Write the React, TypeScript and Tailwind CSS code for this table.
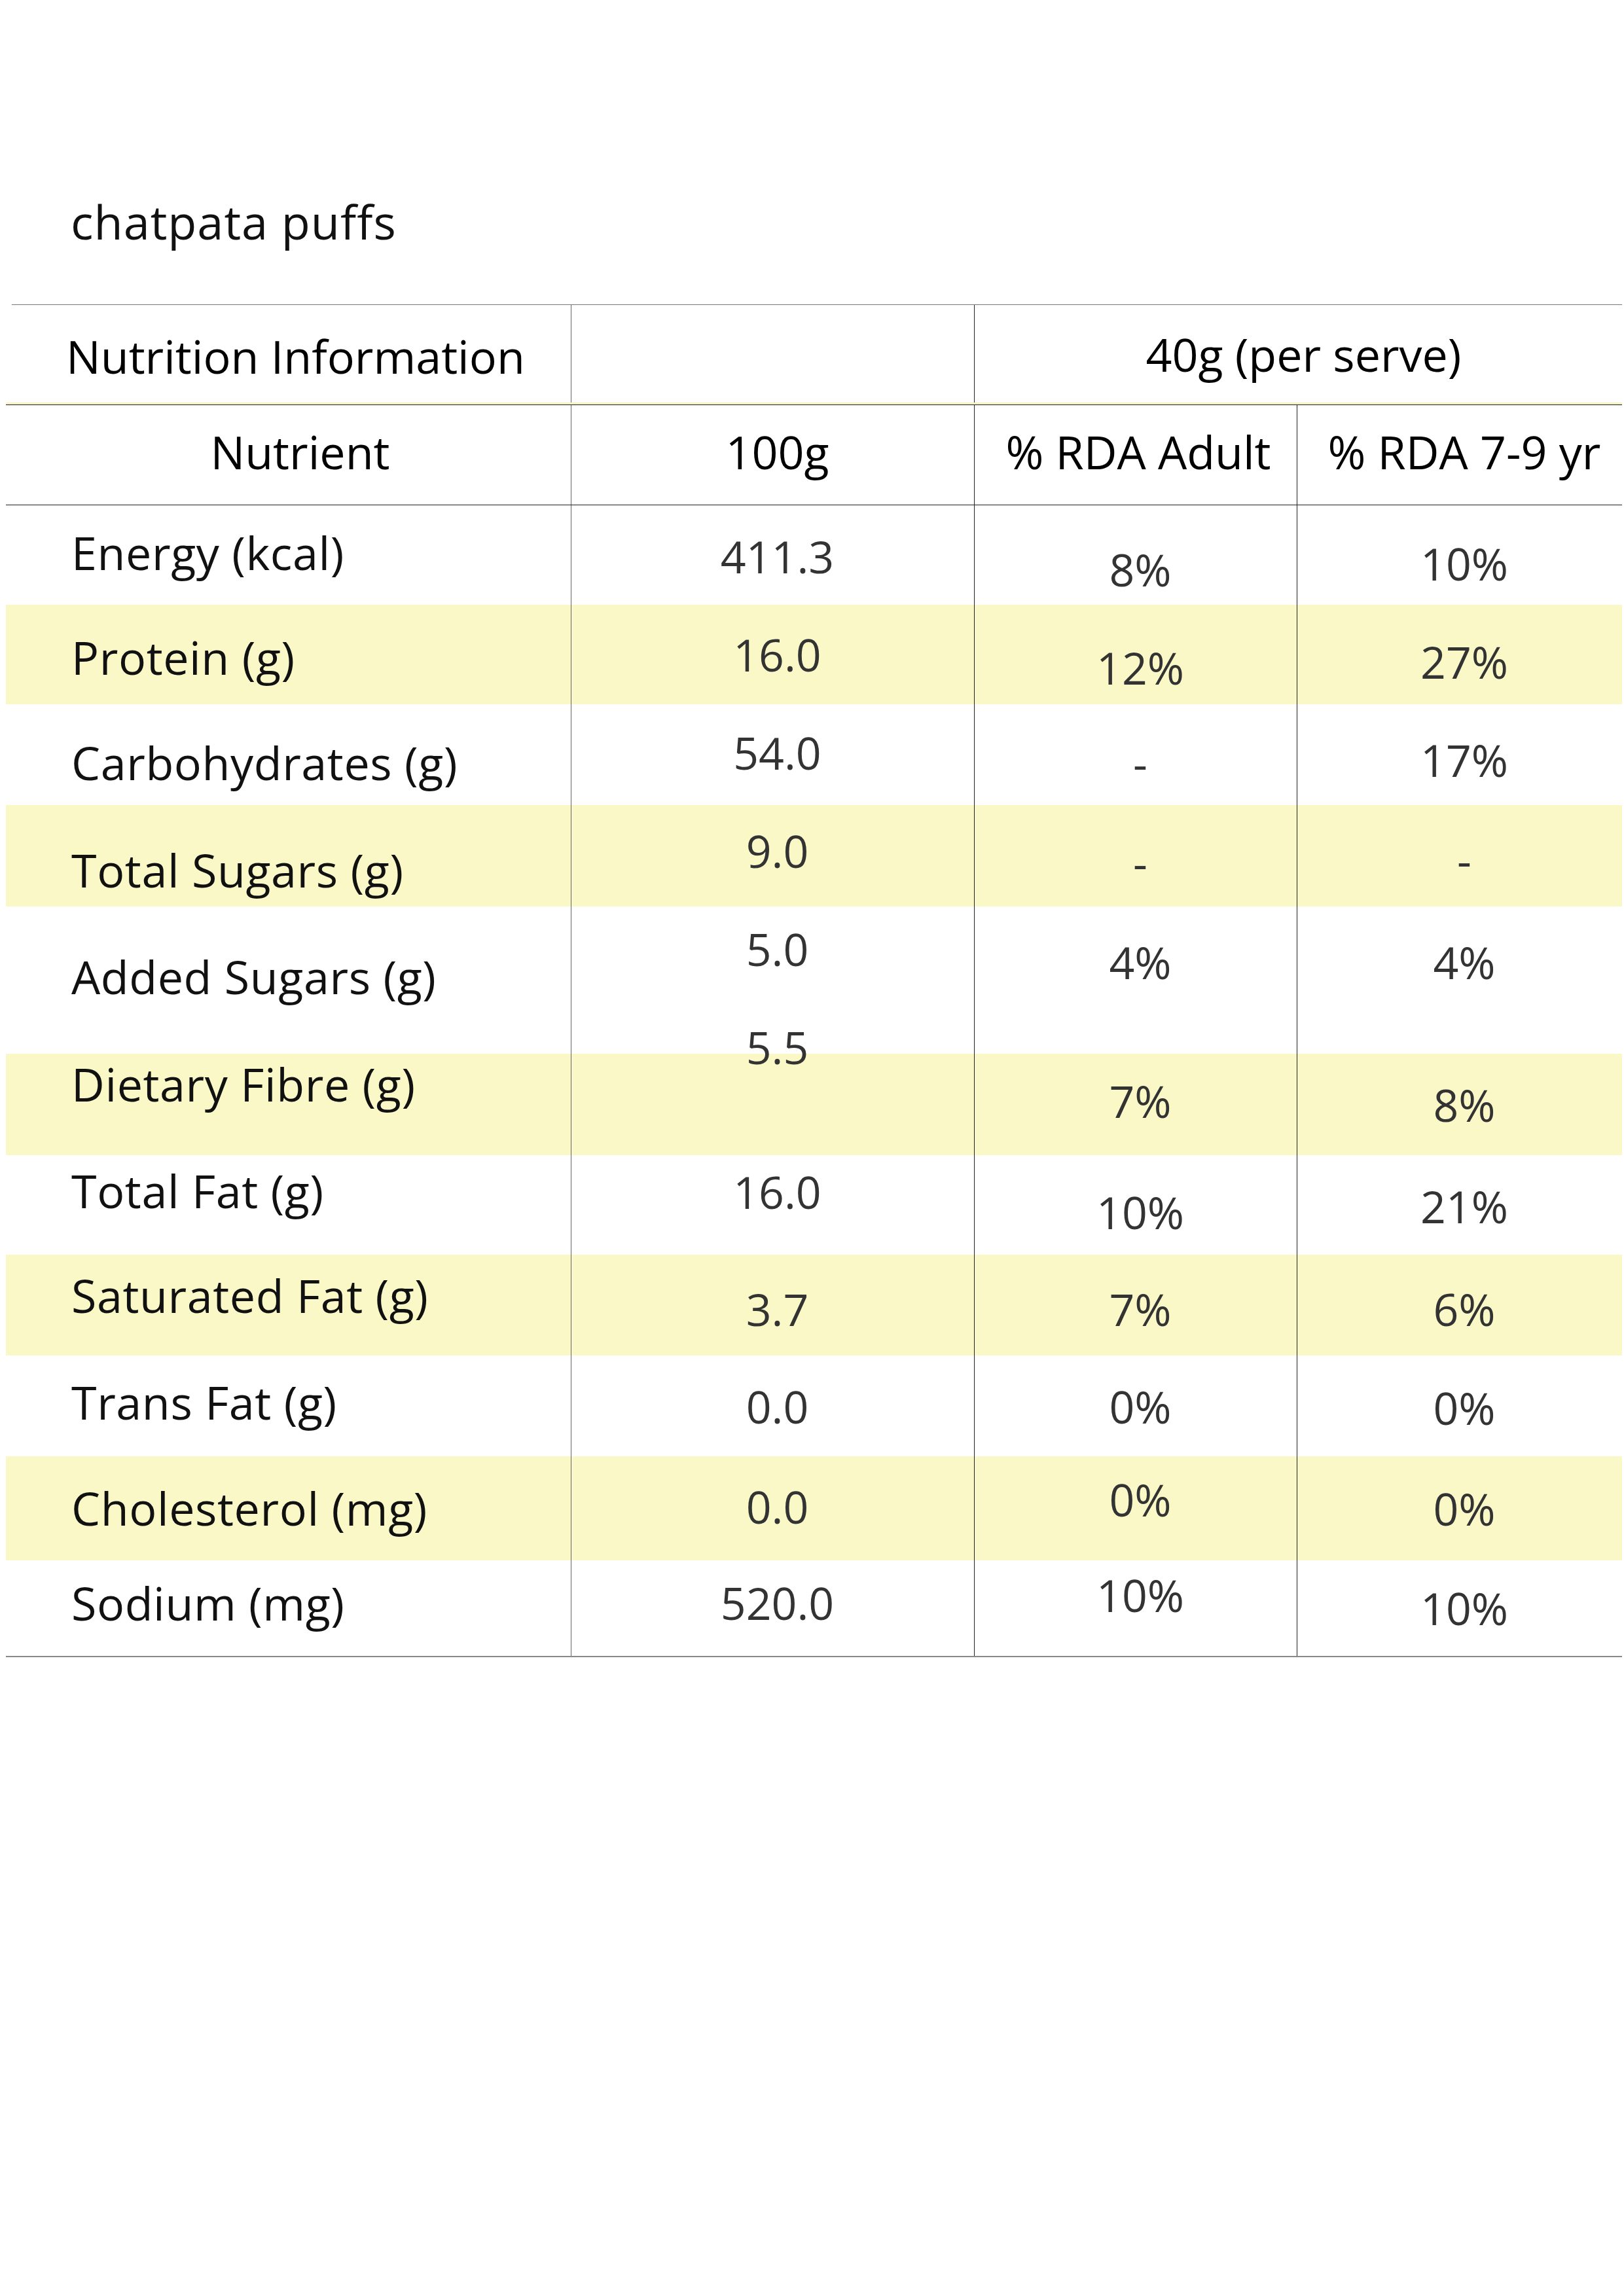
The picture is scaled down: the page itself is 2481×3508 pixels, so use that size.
import React from "react";

type Cell = { text: string; cls: string };

interface NutrientRow {
  label: Cell;
  cells: Cell[];
  height: string;
  shaded: boolean;
}

// vertical offsets in the source are uneven, kept per cell as padding
const rows: NutrientRow[] = [
  {
    label: { text: "Energy (kcal)", cls: "pb-[8px]" },
    cells: [
      { text: "411.3", cls: "pt-[4px]" },
      { text: "8%", cls: "pt-[44px]" },
      { text: "10%", cls: "pt-[26px]" },
    ],
    height: "h-[152px]",
    shaded: false,
  },
  {
    label: { text: "Protein (g)", cls: "pt-[8px]" },
    cells: [
      { text: "16.0", cls: "" },
      { text: "12%", cls: "pt-[40px]" },
      { text: "27%", cls: "pt-[22px]" },
    ],
    height: "h-[152px]",
    shaded: true,
  },
  {
    label: { text: "Carbohydrates (g)", cls: "pt-[24px]" },
    cells: [
      { text: "54.0", cls: "pb-[6px]" },
      { text: "-", cls: "pt-[26px]" },
      { text: "17%", cls: "pt-[16px]" },
    ],
    height: "h-[154px]",
    shaded: false,
  },
  {
    label: { text: "Total Sugars (g)", cls: "pt-[42px]" },
    cells: [
      { text: "9.0", cls: "pb-[16px]" },
      { text: "-", cls: "pt-[20px]" },
      { text: "-", cls: "pt-[12px]" },
    ],
    height: "h-[155px]",
    shaded: true,
  },
  {
    label: { text: "Added Sugars (g)", cls: "pb-[12px]" },
    cells: [
      { text: "5.0", cls: "pb-[96px]" },
      { text: "4%", cls: "pb-[56px]" },
      { text: "4%", cls: "pb-[56px]" },
    ],
    height: "h-[225px]",
    shaded: false,
  },
  {
    label: { text: "Dietary Fibre (g)", cls: "pb-[64px]" },
    cells: [
      { text: "5.5", cls: "pb-[176px]" },
      { text: "7%", cls: "pb-[12px]" },
      { text: "8%", cls: "" },
    ],
    height: "h-[155px]",
    shaded: true,
  },
  {
    label: { text: "Total Fat (g)", cls: "pb-[44px]" },
    cells: [
      { text: "16.0", cls: "pb-[40px]" },
      { text: "10%", cls: "pt-[22px]" },
      { text: "21%", cls: "pt-[4px]" },
    ],
    height: "h-[152px]",
    shaded: false,
  },
  {
    label: { text: "Saturated Fat (g)", cls: "pb-[30px]" },
    cells: [
      { text: "3.7", cls: "pt-[12px]" },
      { text: "7%", cls: "pt-[12px]" },
      { text: "6%", cls: "pt-[12px]" },
    ],
    height: "h-[154px]",
    shaded: true,
  },
  {
    label: { text: "Trans Fat (g)", cls: "pb-[12px]" },
    cells: [
      { text: "0.0", cls: "pt-[2px]" },
      { text: "0%", cls: "pt-[2px]" },
      { text: "0%", cls: "pt-[6px]" },
    ],
    height: "h-[154px]",
    shaded: false,
  },
  {
    label: { text: "Cholesterol (mg)", cls: "pb-[2px]" },
    cells: [
      { text: "0.0", cls: "pb-[6px]" },
      { text: "0%", cls: "pb-[28px]" },
      { text: "0%", cls: "" },
    ],
    height: "h-[159px]",
    shaded: true,
  },
  {
    label: { text: "Sodium (mg)", cls: "pb-[16px]" },
    cells: [
      { text: "520.0", cls: "pb-[16px]" },
      { text: "10%", cls: "pb-[40px]" },
      { text: "10%", cls: "" },
    ],
    height: "h-[146px]",
    shaded: false,
  },
];

const DataRow: React.FC<{ row: NutrientRow }> = ({ row }) => {
  const bg = row.shaded ? "bg-[#faf8c6]" : "bg-white";
  return (
    <div
      className={`grid grid-cols-[864px_616px_493px_1fr] grid-rows-1 ${row.height} ${bg}`}
    >
      <div className="flex min-h-0 items-center border-r border-[#666] pl-[100px]">
        <span className={`block ${row.label.cls} text-[70px] tracking-[0.6px] text-[#111]`}>
          {row.label.text}
        </span>
      </div>
      {row.cells.map((cell, i) => (
        <div
          key={i}
          className={`flex min-h-0 items-center justify-center pl-[14px] ${
            i < 2 ? "border-r border-[#222]" : ""
          }`}
        >
          <span className={`block ${cell.cls} text-[#333]`}>{cell.text}</span>
        </div>
      ))}
    </div>
  );
};

const App: React.FC = () => {
  return (
    <div className="w-[2481px] h-[3508px] bg-white font-['Open_Sans',sans-serif] text-[68px] leading-none">
      <div className="pt-[302px] pl-[108px] text-[72px] tracking-[1px] text-[#111]">
        chatpata puffs
      </div>

      <div className="mt-[91px] ml-[9px] w-[2469px]">
        {/* top rule */}
        <div className="ml-[9px] h-px bg-[#777]" />

        {/* header: title + serving */}
        <div className="grid grid-cols-[864px_616px_1fr] h-[152px] border-b-[3px] border-b-[#f5f1c0] text-[70px]">
          <div className="flex items-center border-r border-[#666] pl-[92px] text-black">
            <span className="block pt-[6px]">Nutrition Information</span>
          </div>
          <div className="border-r border-[#222]" />
          <div className="flex items-center justify-center pl-[16px] text-black">
            <span className="block">40g (per serve)</span>
          </div>
        </div>

        {/* header: column names */}
        <div className="grid grid-cols-[864px_616px_493px_1fr] h-[154px] border-y border-[#222] text-[70px] text-black">
          <div className="flex items-center justify-center border-r border-[#666] pl-[36px]">
            <span className="block pb-[10px]">Nutrient</span>
          </div>
          <div className="flex items-center justify-center border-r border-[#222] pl-[14px]">
            <span className="block pb-[10px]">100g</span>
          </div>
          <div className="flex items-center justify-center border-r border-[#222] pl-[8px]">
            <span className="block pb-[10px]">% RDA Adult</span>
          </div>
          <div className="flex items-center justify-center pl-[14px]">
            <span className="block pb-[10px]">% RDA 7-9 yr</span>
          </div>
        </div>

        {rows.map((row) => (
          <DataRow key={row.label.text} row={row} />
        ))}

        {/* bottom rule */}
        <div className="h-[2px] bg-[#888]" />
      </div>
    </div>
  );
};

export default App;
